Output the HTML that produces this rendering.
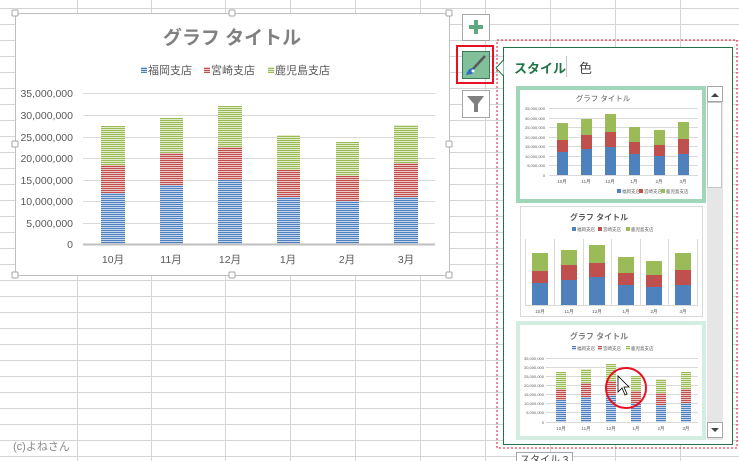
<!DOCTYPE html>
<html><head><meta charset="utf-8"><style>
html,body{margin:0;padding:0;width:739px;height:461px;overflow:hidden;background:#fff;font-family:"Liberation Sans","Noto Sans CJK JP",sans-serif;}
.grid{position:absolute;left:0;top:0;width:739px;height:461px;
background-image:linear-gradient(to bottom,#d4d4d4 1px,transparent 1px);
background-size:100% 16px;background-position:0 8px;}
.v{position:absolute;top:0;width:1px;height:461px;background:#d4d4d4;}
</style></head><body>
<div class="grid"></div>
<div class="v" style="left:77px"></div><div class="v" style="left:151px"></div><div class="v" style="left:225px"></div><div class="v" style="left:290px"></div><div class="v" style="left:355px"></div><div class="v" style="left:420px"></div><div class="v" style="left:485px"></div><div class="v" style="left:550px"></div><div class="v" style="left:615px"></div><div class="v" style="left:680px"></div>
<div style="position:absolute;left:13px;top:438px;font-size:11px;color:#8a8a8a">(c)よねさん</div>
<svg width="739" height="461" style="position:absolute;left:0;top:0" font-family="Liberation Sans, Noto Sans CJK JP, sans-serif">
<defs>
<pattern id="pb" width="4" height="2" patternUnits="userSpaceOnUse"><rect width="4" height="2" fill="#c5d6ee"/><rect width="4" height="1" fill="#4f81bd"/></pattern>
<pattern id="pr" width="4" height="2" patternUnits="userSpaceOnUse"><rect width="4" height="2" fill="#ecc6c5"/><rect width="4" height="1" fill="#c0504d"/></pattern>
<pattern id="pg" width="4" height="2" patternUnits="userSpaceOnUse"><rect width="4" height="2" fill="#e1ecc9"/><rect width="4" height="1" fill="#9bbb59"/></pattern>
</defs>
<rect x="15.5" y="13.5" width="434" height="262" fill="#fff" stroke="#bfbfbf"/>
<g fill="#fff" stroke="#a6a6a6"><rect x="12" y="10" width="6" height="6" rx="1"/><rect x="229" y="10" width="6" height="6" rx="1"/><rect x="446" y="10" width="6" height="6" rx="1"/><rect x="12" y="141" width="6" height="6" rx="1"/><rect x="446" y="141" width="6" height="6" rx="1"/><rect x="12" y="272" width="6" height="6" rx="1"/><rect x="229" y="272" width="6" height="6" rx="1"/><rect x="446" y="272" width="6" height="6" rx="1"/></g>
<text x="232" y="44" font-size="19" font-weight="bold" fill="#808080" text-anchor="middle">グラフ タイトル</text>
<g font-size="11" fill="#595959"><rect x="141" y="67" width="6" height="6" fill="url(#pb)"/><text x="148" y="74">福岡支店</text>
<rect x="204" y="67" width="6" height="6" fill="url(#pr)"/><text x="211" y="74">宮崎支店</text>
<rect x="268" y="67" width="6" height="6" fill="url(#pg)"/><text x="275" y="74">鹿児島支店</text></g>
<g stroke="#d9d9d9"><line x1="83" x2="435" y1="93.5" y2="93.5"/><line x1="83" x2="435" y1="115.5" y2="115.5"/><line x1="83" x2="435" y1="137.5" y2="137.5"/><line x1="83" x2="435" y1="158.5" y2="158.5"/><line x1="83" x2="435" y1="180.5" y2="180.5"/><line x1="83" x2="435" y1="201.5" y2="201.5"/><line x1="83" x2="435" y1="223.5" y2="223.5"/></g>
<g font-size="10.5" fill="#595959" text-anchor="end"><text x="73" y="97">35,000,000</text><text x="73" y="119">30,000,000</text><text x="73" y="141">25,000,000</text><text x="73" y="162">20,000,000</text><text x="73" y="184">15,000,000</text><text x="73" y="205">10,000,000</text><text x="73" y="227">5,000,000</text><text x="73" y="248">0</text></g>
<g>
<rect x="101" y="126" width="24" height="40" fill="url(#pg)"/><rect x="101" y="165" width="24" height="28" fill="url(#pr)"/><rect x="101" y="193" width="24" height="51" fill="url(#pb)"/>
<rect x="160" y="118" width="23" height="36" fill="url(#pg)"/><rect x="160" y="153" width="23" height="32" fill="url(#pr)"/><rect x="160" y="185" width="23" height="59" fill="url(#pb)"/>
<rect x="218" y="106" width="24" height="42" fill="url(#pg)"/><rect x="218" y="147" width="24" height="33" fill="url(#pr)"/><rect x="218" y="180" width="24" height="64" fill="url(#pb)"/>
<rect x="277" y="135" width="23" height="35" fill="url(#pg)"/><rect x="277" y="170" width="23" height="27" fill="url(#pr)"/><rect x="277" y="197" width="23" height="47" fill="url(#pb)"/>
<rect x="336" y="142" width="23" height="34" fill="url(#pg)"/><rect x="336" y="176" width="23" height="25" fill="url(#pr)"/><rect x="336" y="201" width="23" height="43" fill="url(#pb)"/>
<rect x="394" y="125" width="24" height="38" fill="url(#pg)"/><rect x="394" y="163" width="24" height="34" fill="url(#pr)"/><rect x="394" y="197" width="24" height="47" fill="url(#pb)"/>
</g>
<line x1="83" x2="435" y1="244.5" y2="244.5" stroke="#bfbfbf" stroke-width="2"/>
<g font-size="10.5" fill="#595959" text-anchor="middle"><text x="113" y="263">10月</text><text x="171" y="263">11月</text><text x="230" y="263">12月</text><text x="288" y="263">1月</text><text x="347" y="263">2月</text><text x="406" y="263">3月</text></g>
<rect x="462.5" y="14.5" width="27" height="26" fill="#fff" stroke="#a6a6a6"/>
<path d="M476 20v14M469 27h14" stroke="#5fa882" stroke-width="4"/>
<rect x="457" y="46" width="36" height="37" fill="none" stroke="#e81123" stroke-width="2"/>
<rect x="462.5" y="51.5" width="27" height="27" fill="#82bf9b" stroke="#3d7a58"/>
<path d="M485 56 L472 70" stroke="#595959" stroke-width="2.5"/>
<path d="M466 75 Q468 68 473 68 Q476 71 472 74 Z" fill="#2f6fc1"/><circle cx="473" cy="71" r="1.5" fill="#fff"/>
<rect x="462.5" y="90.5" width="27" height="27" fill="#fff" stroke="#a6a6a6"/>
<path d="M467 96h17l-6 8v8l-4 0v-8z" fill="#7f7f7f"/>
<rect x="497" y="40" width="240" height="408" fill="none" stroke="#e81123" stroke-dasharray="2,2"/>
<rect x="503.5" y="47.5" width="229" height="397" fill="#fff" stroke="#217346"/>
<path d="M503.5 60 L496 68 L503.5 76" fill="#fff" stroke="#217346"/>
<rect x="504" y="61" width="2" height="14" fill="#fff"/>
<text x="514" y="73" font-size="13" font-weight="bold" fill="#217346">スタイル</text>
<line x1="566.5" x2="566.5" y1="56" y2="77" stroke="#c6c6c6"/>
<text x="579" y="73" font-size="13" fill="#444">色</text>
<rect x="707" y="86" width="16" height="354" fill="#e6e6e6"/>
<rect x="707.5" y="86.5" width="15" height="15" fill="#fff" stroke="#a6a6a6"/><path d="M711 97h8l-4-4z" fill="#444"/>
<rect x="707.5" y="102.5" width="14" height="85" fill="#fff" stroke="#c6c6c6"/>
<rect x="707.5" y="422.5" width="15" height="15" fill="#fff" stroke="#a6a6a6"/><path d="M711 428h8l-4 4z" fill="#444"/>
<rect x="518" y="88" width="186" height="113" fill="#fff" stroke="#a0d6b9" stroke-width="4"/>
<text x="603" y="101" font-size="7.5" fill="#595959" text-anchor="middle">グラフ タイトル</text>
<g stroke="#d9d9d9"><line x1="549" x2="698" y1="108.5" y2="108.5"/><line x1="549" x2="698" y1="118.5" y2="118.5"/><line x1="549" x2="698" y1="127.5" y2="127.5"/><line x1="549" x2="698" y1="137.5" y2="137.5"/><line x1="549" x2="698" y1="146.5" y2="146.5"/><line x1="549" x2="698" y1="156.5" y2="156.5"/><line x1="549" x2="698" y1="165.5" y2="165.5"/><line x1="549" x2="698" y1="175.5" y2="175.5"/></g>
<g font-size="4" fill="#595959" text-anchor="end"><text x="545" y="110">35,000,000</text><text x="545" y="120">30,000,000</text><text x="545" y="129">25,000,000</text><text x="545" y="139">20,000,000</text><text x="545" y="148">15,000,000</text><text x="545" y="158">10,000,000</text><text x="545" y="167">5,000,000</text><text x="545" y="177">0</text></g>
<g>
<rect x="557" y="123" width="11" height="17" fill="#9bbb59"/><rect x="557" y="140" width="11" height="12" fill="#c0504d"/><rect x="557" y="152" width="11" height="23" fill="#4f81bd"/>
<rect x="581" y="119" width="11" height="16" fill="#9bbb59"/><rect x="581" y="135" width="11" height="14" fill="#c0504d"/><rect x="581" y="149" width="11" height="26" fill="#4f81bd"/>
<rect x="605" y="114" width="11" height="18" fill="#9bbb59"/><rect x="605" y="132" width="11" height="15" fill="#c0504d"/><rect x="605" y="147" width="11" height="28" fill="#4f81bd"/>
<rect x="629" y="127" width="11" height="15" fill="#9bbb59"/><rect x="629" y="142" width="11" height="12" fill="#c0504d"/><rect x="629" y="154" width="11" height="21" fill="#4f81bd"/>
<rect x="654" y="130" width="11" height="15" fill="#9bbb59"/><rect x="654" y="145" width="11" height="11" fill="#c0504d"/><rect x="654" y="156" width="11" height="19" fill="#4f81bd"/>
<rect x="678" y="122" width="11" height="17" fill="#9bbb59"/><rect x="678" y="139" width="11" height="15" fill="#c0504d"/><rect x="678" y="154" width="11" height="21" fill="#4f81bd"/>
</g>
<g font-size="4.5" fill="#595959" text-anchor="middle"><text x="562" y="183">10月</text><text x="586" y="183">11月</text><text x="610" y="183">12月</text><text x="634" y="183">1月</text><text x="659" y="183">2月</text><text x="683" y="183">3月</text></g>
<g font-size="4.5" fill="#595959"><rect x="617" y="189" width="4" height="4" fill="#4f81bd"/><text x="622" y="193">福岡支店</text><rect x="639" y="189" width="4" height="4" fill="#c0504d"/><text x="644" y="193">宮崎支店</text><rect x="661" y="189" width="4" height="4" fill="#9bbb59"/><text x="666" y="193">鹿児島支店</text></g>
<rect x="520.5" y="206.5" width="182" height="110" fill="#fff" stroke="#d9d9d9"/>
<text x="599" y="220" font-size="8" font-weight="bold" fill="#595959" text-anchor="middle">グラフ タイトル</text>
<g font-size="4.5" fill="#595959"><rect x="572" y="227" width="4" height="4" fill="#4f81bd"/><text x="577" y="231">福岡支店</text><rect x="598" y="227" width="4" height="4" fill="#c0504d"/><text x="603" y="231">宮崎支店</text><rect x="626" y="227" width="4" height="4" fill="#9bbb59"/><text x="631" y="231">鹿児島支店</text></g>
<g stroke="#d9d9d9"><line x1="525.5" x2="525.5" y1="239" y2="305"/><line x1="554.5" x2="554.5" y1="239" y2="305"/><line x1="583.5" x2="583.5" y1="239" y2="305"/><line x1="611.5" x2="611.5" y1="239" y2="305"/><line x1="640.5" x2="640.5" y1="239" y2="305"/><line x1="668.5" x2="668.5" y1="239" y2="305"/><line x1="697.5" x2="697.5" y1="239" y2="305"/><line x1="525" x2="698" y1="305.5" y2="305.5"/></g>
<g>
<rect x="532" y="253" width="16" height="18" fill="#9bbb59"/><rect x="532" y="271" width="16" height="12" fill="#c0504d"/><rect x="532" y="283" width="16" height="22" fill="#4f81bd"/>
<rect x="561" y="250" width="16" height="15" fill="#9bbb59"/><rect x="561" y="265" width="16" height="15" fill="#c0504d"/><rect x="561" y="280" width="16" height="25" fill="#4f81bd"/>
<rect x="589" y="245" width="16" height="18" fill="#9bbb59"/><rect x="589" y="263" width="16" height="14" fill="#c0504d"/><rect x="589" y="277" width="16" height="28" fill="#4f81bd"/>
<rect x="618" y="257" width="16" height="16" fill="#9bbb59"/><rect x="618" y="273" width="16" height="12" fill="#c0504d"/><rect x="618" y="285" width="16" height="20" fill="#4f81bd"/>
<rect x="646" y="261" width="16" height="14" fill="#9bbb59"/><rect x="646" y="275" width="16" height="12" fill="#c0504d"/><rect x="646" y="287" width="16" height="18" fill="#4f81bd"/>
<rect x="675" y="253" width="16" height="17" fill="#9bbb59"/><rect x="675" y="270" width="16" height="15" fill="#c0504d"/><rect x="675" y="285" width="16" height="20" fill="#4f81bd"/>
</g>
<g font-size="4.5" fill="#595959" text-anchor="middle"><text x="540" y="313">10月</text><text x="569" y="313">11月</text><text x="597" y="313">12月</text><text x="626" y="313">1月</text><text x="654" y="313">2月</text><text x="683" y="313">3月</text></g>
<rect x="518" y="323" width="186" height="115" fill="#fff" stroke="#d3ede0" stroke-width="4"/>
<text x="599" y="339" font-size="8" font-weight="bold" fill="#7f7f7f" text-anchor="middle">グラフ タイトル</text>
<g font-size="4.5" fill="#595959"><rect x="572" y="346" width="4" height="4" fill="url(#pb)"/><text x="577" y="350">福岡支店</text><rect x="598" y="346" width="4" height="4" fill="url(#pr)"/><text x="603" y="350">宮崎支店</text><rect x="626" y="346" width="4" height="4" fill="url(#pg)"/><text x="631" y="350">鹿児島支店</text></g>
<g stroke="#d9d9d9"><line x1="546" x2="698" y1="358.5" y2="358.5"/><line x1="546" x2="698" y1="367.5" y2="367.5"/><line x1="546" x2="698" y1="376.5" y2="376.5"/><line x1="546" x2="698" y1="385.5" y2="385.5"/><line x1="546" x2="698" y1="394.5" y2="394.5"/><line x1="546" x2="698" y1="403.5" y2="403.5"/><line x1="546" x2="698" y1="412.5" y2="412.5"/><line x1="546" x2="698" y1="422.5" y2="422.5"/></g>
<g font-size="4" fill="#595959" text-anchor="end"><text x="544" y="360">35,000,000</text><text x="544" y="369">30,000,000</text><text x="544" y="378">25,000,000</text><text x="544" y="387">20,000,000</text><text x="544" y="396">15,000,000</text><text x="544" y="405">10,000,000</text><text x="544" y="414">5,000,000</text><text x="544" y="424">0</text></g>
<g>
<rect x="556" y="372" width="10" height="17" fill="url(#pg)"/><rect x="556" y="389" width="10" height="11" fill="url(#pr)"/><rect x="556" y="400" width="10" height="22" fill="url(#pb)"/>
<rect x="581" y="369" width="10" height="14" fill="url(#pg)"/><rect x="581" y="383" width="10" height="14" fill="url(#pr)"/><rect x="581" y="397" width="10" height="25" fill="url(#pb)"/>
<rect x="606" y="364" width="10" height="17" fill="url(#pg)"/><rect x="606" y="381" width="10" height="14" fill="url(#pr)"/><rect x="606" y="395" width="10" height="27" fill="url(#pb)"/>
<rect x="631" y="376" width="10" height="15" fill="url(#pg)"/><rect x="631" y="391" width="10" height="12" fill="url(#pr)"/><rect x="631" y="403" width="10" height="19" fill="url(#pb)"/>
<rect x="656" y="379" width="10" height="14" fill="url(#pg)"/><rect x="656" y="393" width="10" height="12" fill="url(#pr)"/><rect x="656" y="405" width="10" height="17" fill="url(#pb)"/>
<rect x="681" y="372" width="10" height="17" fill="url(#pg)"/><rect x="681" y="389" width="10" height="14" fill="url(#pr)"/><rect x="681" y="403" width="10" height="19" fill="url(#pb)"/>
</g>
<g font-size="4.5" fill="#595959" text-anchor="middle"><text x="561" y="430">10月</text><text x="586" y="430">11月</text><text x="611" y="430">12月</text><text x="636" y="430">1月</text><text x="661" y="430">2月</text><text x="686" y="430">3月</text></g>
<circle cx="626" cy="388" r="20" fill="none" stroke="#e81123" stroke-width="2"/>
<path d="M618 376 L618 392 L622 388 L625 395 L627 394 L624 387 L629 387 Z" fill="#fff" stroke="#000" stroke-width="0.8"/>
<rect x="516.5" y="452.5" width="56" height="12" fill="#fff" stroke="#a6a6a6"/>
<text x="520" y="463" font-size="10" fill="#444">スタイル 3</text>
</svg>
</body></html>
